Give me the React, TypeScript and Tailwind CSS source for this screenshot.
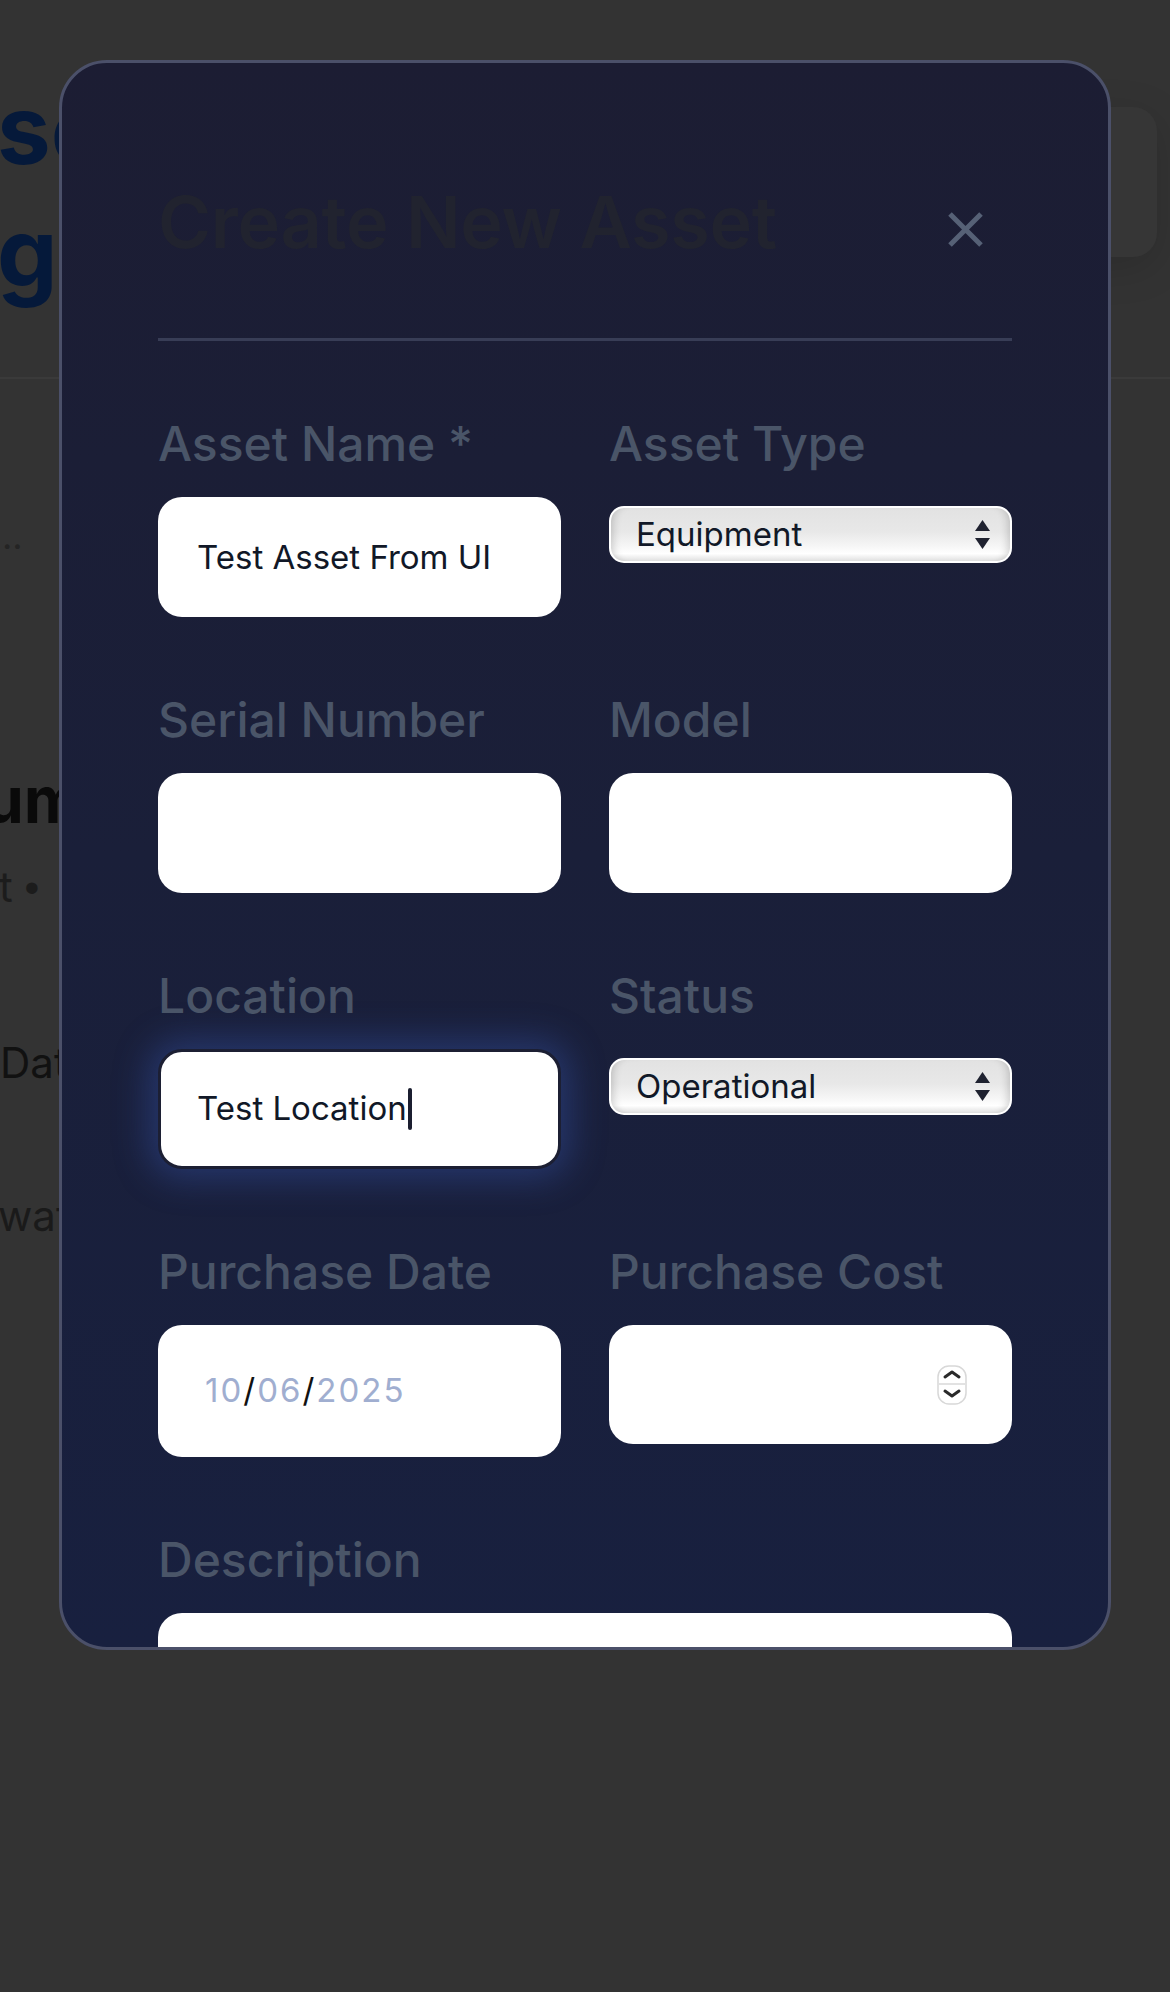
import React from "react";

const labelCls = "block text-[48px] leading-[72px] font-medium text-[#4a5568] mb-[17px]";
const inputCls = "block w-full h-[120px] rounded-[24px] bg-white px-[39px] text-[33px] text-[#111827] outline-none";

// native-looking select, glossy like the ios one
function SelectBox({ value }: { value: string }) {
  return (
    <div className="mt-[26px] flex items-center h-[57px] rounded-[15px] border-[2px] border-white bg-[linear-gradient(180deg,#e2e2e2_0%,#e8e8e8_45%,#f6f6f6_72%,#ffffff_86%,#e0e0e0_100%)] shadow-[inset_9px_0_8px_-7px_rgba(0,0,0,0.18),inset_-9px_0_8px_-7px_rgba(0,0,0,0.18)]">
      <select
        defaultValue={value}
        className="appearance-none flex-1 bg-transparent pl-[25px] text-[33px] text-[#111827] outline-none"
      >
        <option>{value}</option>
      </select>
      <svg width="15" height="29" viewBox="0 0 15 29" className="mr-[20px]">
        <path d="M0 11 L7.5 0 L15 11 Z" fill="#1f2230" />
        <path d="M0 18 L15 18 L7.5 29 Z" fill="#1f2230" />
      </svg>
    </div>
  );
}

function Spinner() {
  return (
    <svg width="30" height="40" viewBox="0 0 30 40" className="mr-[45px]">
      <rect x="1" y="1" width="28" height="38" rx="11" fill="#fff" stroke="#d8d8d8" strokeWidth="1.5" />
      <line x1="2" y1="19" x2="28" y2="19" stroke="#e2e2e2" strokeWidth="2" />
      <path d="M8 12 L15 7 L22 12" fill="none" stroke="#2a2a2a" strokeWidth="3" strokeLinecap="round" strokeLinejoin="round" />
      <path d="M8 26 L15 31 L22 26" fill="none" stroke="#2a2a2a" strokeWidth="3" strokeLinecap="round" strokeLinejoin="round" />
    </svg>
  );
}

export default function App() {
  return (
    <div className="relative w-[1170px] h-[1992px] bg-[#333333] overflow-hidden font-['Inter',sans-serif]">
      {/* page behind the overlay */}
      <div className="flex flex-col">
        <div className="flex justify-between items-start h-[379px] border-b-[2px] border-[#3a3a3a]">
          <div className="mt-[72px] -ml-[3px] text-[96px] leading-[115px] font-bold text-[#05193a]">
            <div>se</div>
            <div className="mt-[8px]">ge</div>
          </div>
          <div className="mt-[107px] mr-[13px] w-[300px] h-[150px] rounded-[24px] bg-[#363636] shadow-[0_10px_40px_rgba(0,0,0,0.15)]"></div>
        </div>
        <div className="mt-[135px] ml-[2px] text-[36px] leading-[44px] text-[#242424]">..</div>
        <div className="mt-[203px] -ml-[16px] text-[64px] leading-[78px] font-bold text-[#0a0a0a]">um</div>
        <div className="mt-[22px] -ml-[1px] text-[42px] leading-[51px] text-[#1c1c1c]">
          t <span className="font-['Liberation_Sans',sans-serif]">•</span>
        </div>
        <div className="mt-[124px] text-[42px] leading-[51px] text-[#111111]">Dat</div>
        <div className="mt-[102px] -ml-[2px] text-[42px] leading-[51px] text-[#1a1a1a]">wat</div>
      </div>

      {/* modal */}
      <div className="absolute left-[59px] top-[60px] w-[1052px] h-[1590px] rounded-[48px] border-[3px] border-[#4b5069] overflow-hidden bg-[linear-gradient(180deg,#1c1d33_0%,#1a1f39_50%,#18203f_100%)] px-[96px] pt-[111px]">
        <div className="flex justify-between items-start border-b-[3px] border-[#383d56] pb-[68px]">
          <h2 className="text-[72px] leading-[96px] font-semibold tracking-[-0.3px] text-[#21232f]">Create New Asset</h2>
          <button type="button" className="mt-[38px] mr-[29px]">
            <svg width="35" height="35" viewBox="0 0 35 35">
              <path d="M2 2 L33 33 M33 2 L2 33" stroke="#566176" strokeWidth="5" />
            </svg>
          </button>
        </div>

        <form className="mt-[67px] grid grid-cols-2 gap-x-[48px] gap-y-[67px]">
          <div>
            <label className={labelCls}>Asset Name *</label>
            <input className={inputCls} defaultValue="Test Asset From UI" />
          </div>
          <div>
            <label className={labelCls}>Asset Type</label>
            <SelectBox value="Equipment" />
          </div>

          <div>
            <label className={labelCls}>Serial Number</label>
            <input className={inputCls} />
          </div>
          <div>
            <label className={labelCls}>Model</label>
            <input className={inputCls} />
          </div>

          <div>
            <label className={labelCls}>Location</label>
            {/* focused field */}
            <div className="flex items-center h-[120px] rounded-[24px] bg-white border-[3px] border-[#1c1f33] pl-[36px] text-[33px] text-[#111827] shadow-[0_0_34px_10px_rgba(55,85,175,0.42)]">
              <span>Test Location</span>
              <span className="inline-block w-[4px] h-[42px] ml-[1px] rounded-full bg-[#1b1e30]"></span>
            </div>
          </div>
          <div>
            <label className={labelCls}>Status</label>
            <SelectBox value="Operational" />
          </div>

          <div>
            <label className={labelCls}>Purchase Date</label>
            <div className="flex items-center h-[132px] rounded-[24px] bg-white pl-[47px] text-[33px] tracking-[2px]">
              <span className="text-[#a0aed0]">10</span>
              <span className="text-[#111111]">/</span>
              <span className="text-[#a0aed0]">06</span>
              <span className="text-[#111111]">/</span>
              <span className="text-[#a0aed0]">2025</span>
            </div>
          </div>
          <div>
            <label className={labelCls}>Purchase Cost</label>
            <div className="flex items-center h-[119px] rounded-[24px] bg-white">
              <input type="text" className="flex-1 min-w-0 bg-transparent pl-[39px] text-[33px] outline-none" />
              <Spinner />
            </div>
          </div>

          <div className="col-span-2">
            <label className={labelCls}>Description</label>
            <textarea className="block w-full h-[300px] rounded-[24px] bg-white resize-none outline-none" />
          </div>
        </form>
      </div>
    </div>
  );
}
